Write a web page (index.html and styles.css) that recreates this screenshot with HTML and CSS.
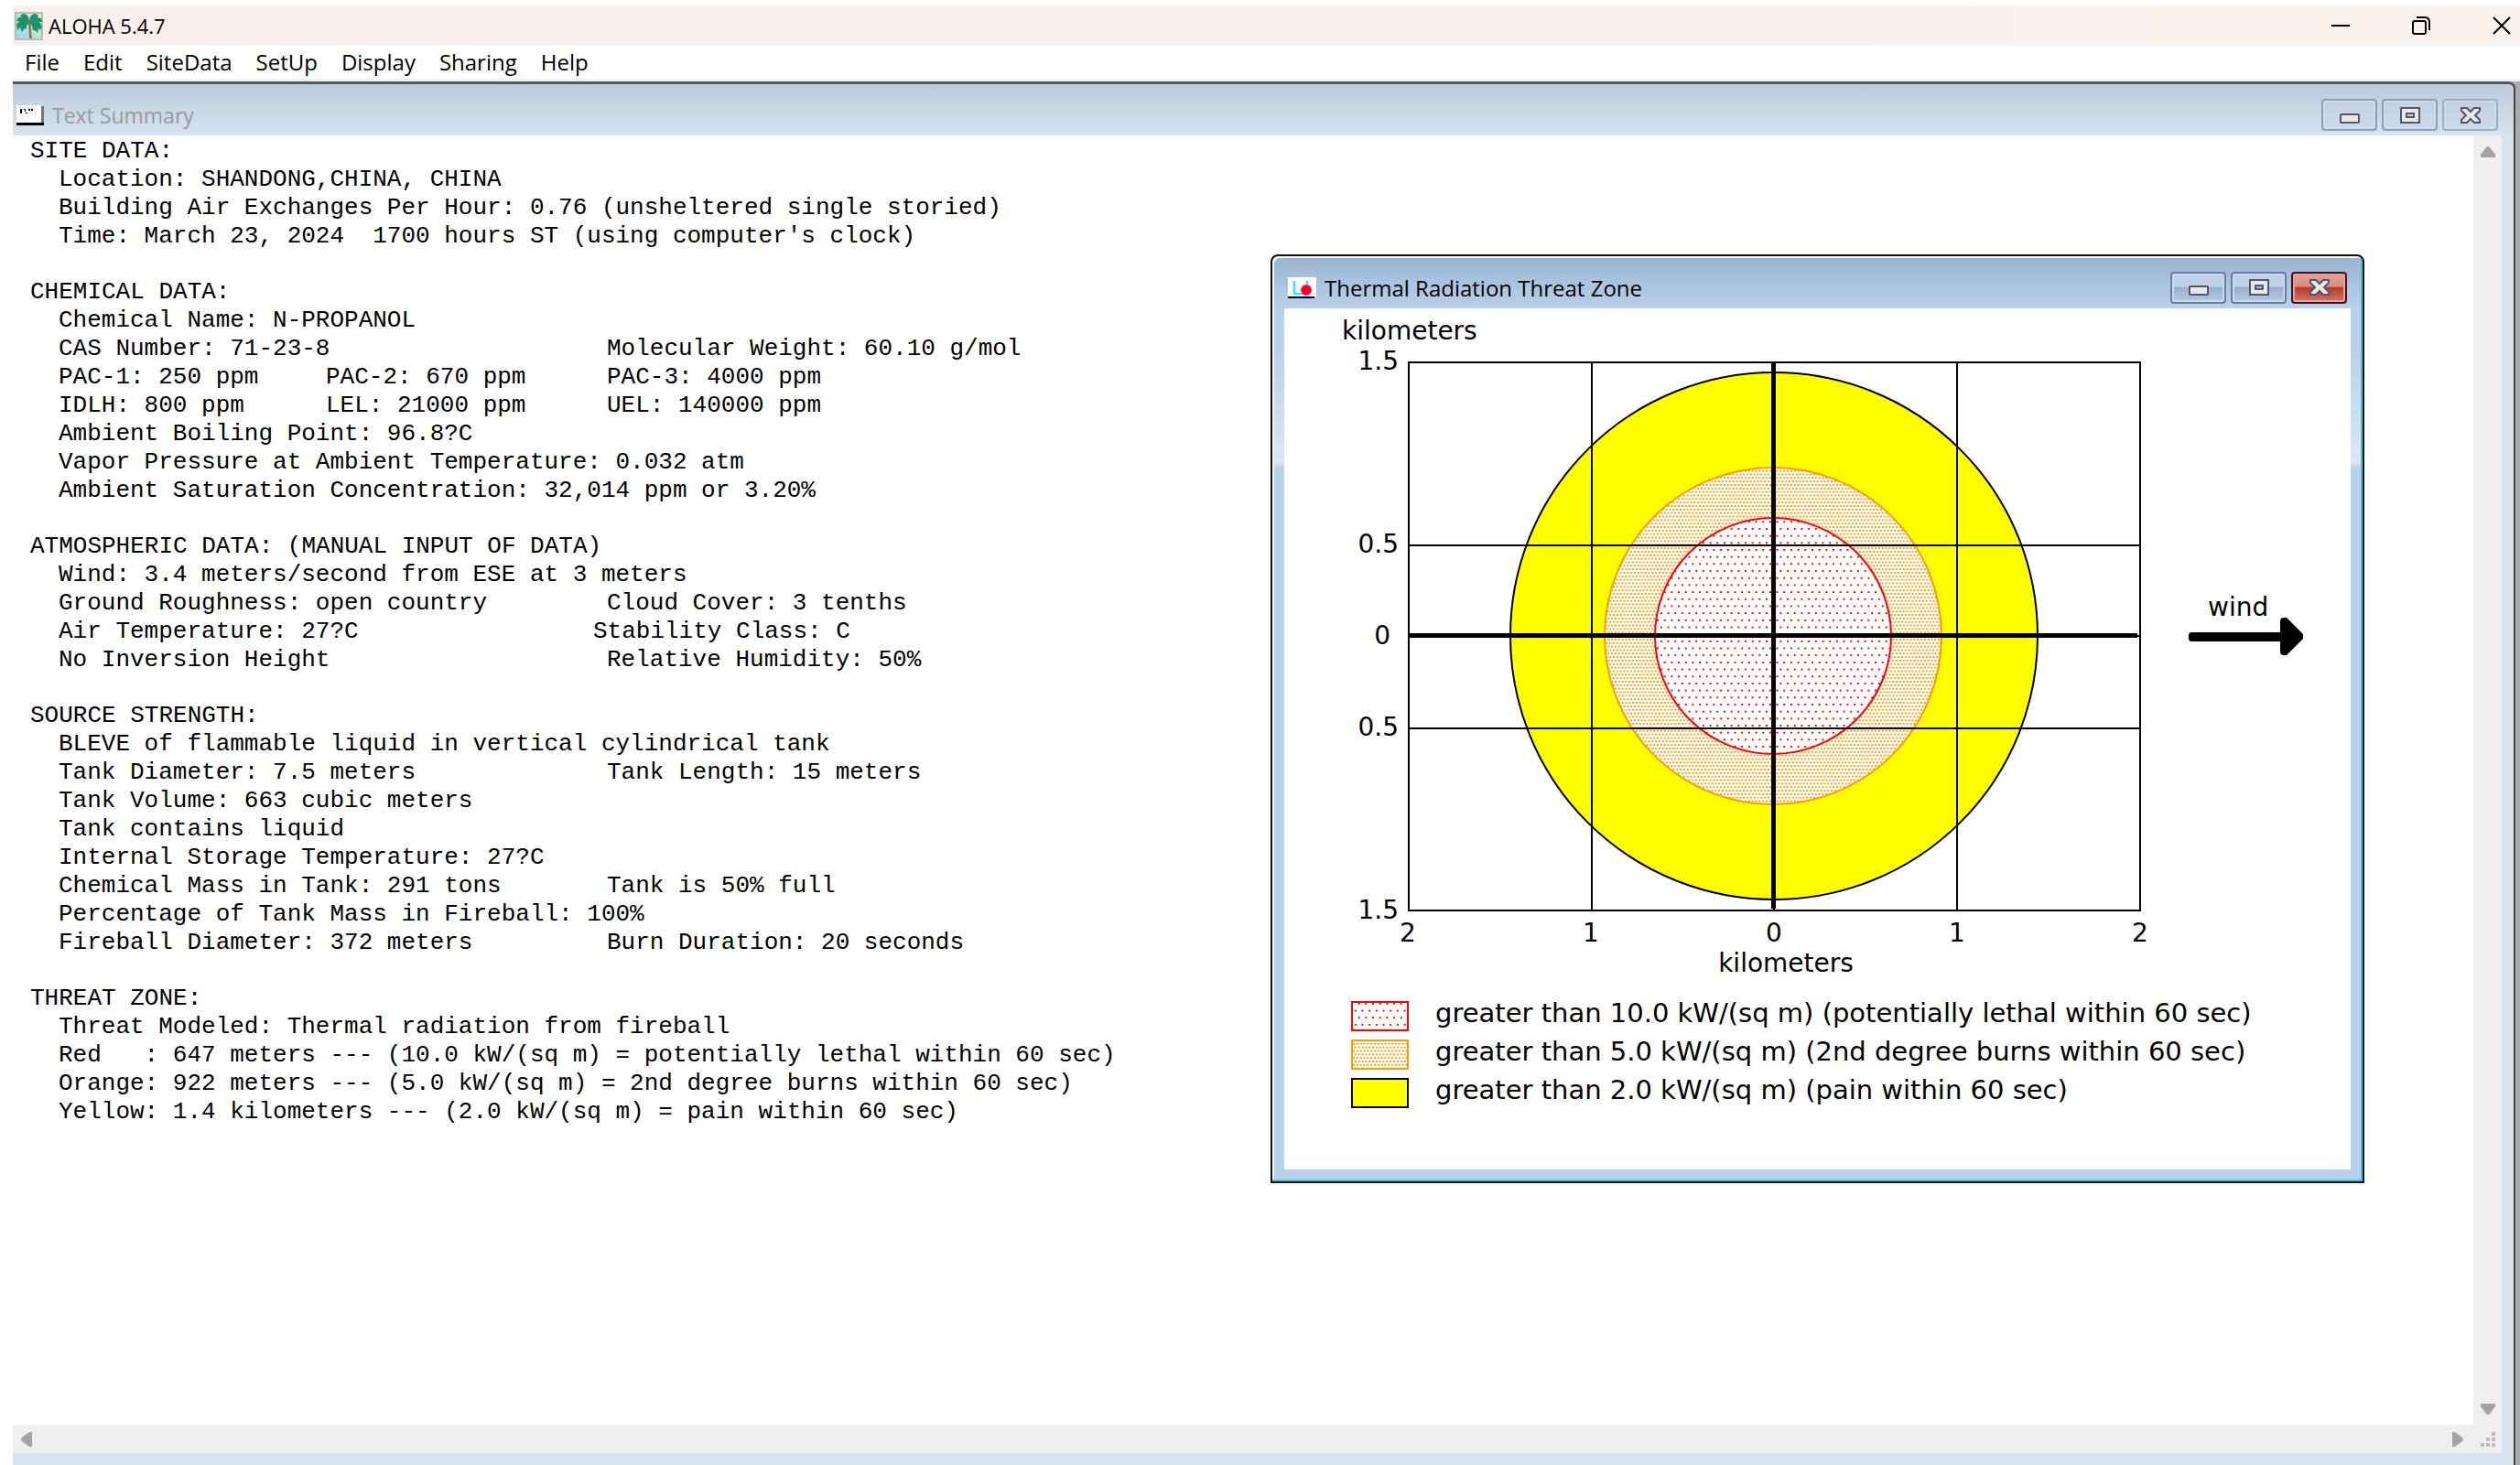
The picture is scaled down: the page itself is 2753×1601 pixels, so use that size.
FILE: index.html
```html
<!DOCTYPE html>
<html lang="en">
<head>
    <meta charset="UTF-8">
    <title>ALOHA 5.4.7</title>
    <link rel="stylesheet" href="styles.css">
</head>
<body>
    <header class="titlebar">
        <svg class="app-icon" viewBox="0 0 31 31" aria-hidden="true">
            <defs>
                <linearGradient id="sky" x1="0" y1="1" x2="1" y2="0">
                    <stop offset="0" stop-color="#8fd8ee"/>
                    <stop offset="1" stop-color="#f2efc0"/>
                </linearGradient>
            </defs>
            <rect x="1" y="1" width="29" height="29" fill="url(#sky)" stroke="#b4bcb8" stroke-width="2"/>
            <path d="M15 10 C15 16 16 22 16 29 L19 29 C18 22 18 16 17 10 Z" fill="#8a7350"/>
            <path d="M16 12 C16 6 14 2 9 2 L6 4 L8 6 L4 6 L2 10 L5 10 L2 14 L3 20 L6 17 L8 22 L11 18 L13 19 L13 15 Z" fill="#1c9370"/>
            <path d="M16 12 C16 6 18 2 23 2 L26 4 L25 6 L29 7 L30 11 L27 11 L30 16 L28 20 L26 18 L25 23 L22 20 L20 20 L19 15 Z" fill="#1c9370"/>
            <circle cx="16" cy="12" r="2" fill="#9c6a3a"/>
        </svg>
        <h1 class="app-title">ALOHA 5.4.7</h1>
        <div class="app-buttons">
            <button class="app-btn" aria-label="Minimize">
                <svg viewBox="0 0 20 20"><path d="M0 10 H20"/></svg>
            </button>
            <button class="app-btn" aria-label="Restore">
                <svg viewBox="0 0 20 20"><rect x="1" y="5" width="14" height="14" rx="2"/><path d="M5 1 H14 Q19 1 19 6 V15"/></svg>
            </button>
            <button class="app-btn" aria-label="Close">
                <svg viewBox="0 0 20 20"><path d="M1 1 L19 19 M19 1 L1 19"/></svg>
            </button>
        </div>
    </header>

    <nav class="menubar">
        <button class="menu-item">File</button>
        <button class="menu-item">Edit</button>
        <button class="menu-item">SiteData</button>
        <button class="menu-item">SetUp</button>
        <button class="menu-item">Display</button>
        <button class="menu-item">Sharing</button>
        <button class="menu-item">Help</button>
    </nav>

    <main class="desktop">
        <section class="summary-window">
            <div class="summary-titlebar">
                <svg class="summary-icon" viewBox="0 0 30 22" aria-hidden="true">
                    <rect width="27" height="20" fill="#fff"/>
                    <path d="M27 1 H30 V19 H27 Z" fill="#777"/>
                    <path d="M0 19 H30 V22 H0 Z" fill="#000"/>
                    <path d="M4 4 H6 V9 H4 Z M8 4 H10 V9 H12 V8 H10 Z M13 4 H15 V6 H13 Z M16 4 H18 V6 H16 Z" fill="#000"/>
                </svg>
                <h2 class="summary-title">Text Summary</h2>
                <div class="win-buttons inactive">
                    <button class="win-btn" aria-label="Minimize"><svg viewBox="0 0 22 18"><rect x="1" y="8" width="20" height="9" rx="1"/></svg></button>
                    <button class="win-btn" aria-label="Maximize"><svg viewBox="0 0 22 18"><path fill-rule="evenodd" d="M1 1 H21 V17 H1 Z M7 7 V11 H15 V7 Z"/></svg></button>
                    <button class="win-btn close" aria-label="Close"><svg viewBox="0 0 22 18"><path d="M1 1 H7 L11 5 L15 1 H21 V4 L16 9 L21 14 V17 H15 L11 13 L7 17 H1 V14 L6 9 L1 4 V1 Z"/></svg></button>
                </div>
            </div>

            <div class="pane">
                <div class="summary">
                    <section>
                        <h3>SITE DATA:</h3>
                        <p>Location: SHANDONG,CHINA, CHINA</p>
                        <p>Building Air Exchanges Per Hour: 0.76 (unsheltered single storied)</p>
                        <p>Time: March 23, 2024  1700 hours ST (using computer's clock)</p>
                    </section>
                    <section>
                        <h3>CHEMICAL DATA:</h3>
                        <p>Chemical Name: N-PROPANOL</p>
                        <p class="cols"><span class="wide">CAS Number: 71-23-8</span><span>Molecular Weight: 60.10 g/mol</span></p>
                        <p class="cols"><span>PAC-1: 250 ppm</span><span>PAC-2: 670 ppm</span><span>PAC-3: 4000 ppm</span></p>
                        <p class="cols"><span>IDLH: 800 ppm</span><span>LEL: 21000 ppm</span><span>UEL: 140000 ppm</span></p>
                        <p>Ambient Boiling Point: 96.8?C</p>
                        <p>Vapor Pressure at Ambient Temperature: 0.032 atm</p>
                        <p>Ambient Saturation Concentration: 32,014 ppm or 3.20%</p>
                    </section>
                    <section>
                        <h3>ATMOSPHERIC DATA: (MANUAL INPUT OF DATA)</h3>
                        <p>Wind: 3.4 meters/second from ESE at 3 meters</p>
                        <p class="cols"><span class="wide">Ground Roughness: open country</span><span>Cloud Cover: 3 tenths</span></p>
                        <p class="cols early"><span class="wide">Air Temperature: 27?C</span><span>Stability Class: C</span></p>
                        <p class="cols"><span class="wide">No Inversion Height</span><span>Relative Humidity: 50%</span></p>
                    </section>
                    <section>
                        <h3>SOURCE STRENGTH:</h3>
                        <p>BLEVE of flammable liquid in vertical cylindrical tank</p>
                        <p class="cols"><span class="wide">Tank Diameter: 7.5 meters</span><span>Tank Length: 15 meters</span></p>
                        <p>Tank Volume: 663 cubic meters</p>
                        <p>Tank contains liquid</p>
                        <p>Internal Storage Temperature: 27?C</p>
                        <p class="cols"><span class="wide">Chemical Mass in Tank: 291 tons</span><span>Tank is 50% full</span></p>
                        <p>Percentage of Tank Mass in Fireball: 100%</p>
                        <p class="cols"><span class="wide">Fireball Diameter: 372 meters</span><span>Burn Duration: 20 seconds</span></p>
                    </section>
                    <section>
                        <h3>THREAT ZONE:</h3>
                        <p>Threat Modeled: Thermal radiation from fireball</p>
                        <p>Red   : 647 meters --- (10.0 kW/(sq m) = potentially lethal within 60 sec)</p>
                        <p>Orange: 922 meters --- (5.0 kW/(sq m) = 2nd degree burns within 60 sec)</p>
                        <p>Yellow: 1.4 kilometers --- (2.0 kW/(sq m) = pain within 60 sec)</p>
                    </section>
                </div>
                <div class="scroll-v">
                    <button class="scroll-btn" aria-label="Scroll up"><svg viewBox="0 0 16 16"><path d="M6 3 Q8 1 10 3 L16 11 V14 H0 V11 Z"/></svg></button>
                    <button class="scroll-btn" aria-label="Scroll down"><svg viewBox="0 0 16 16"><path d="M6 13 Q8 15 10 13 L16 5 V2 H0 V5 Z"/></svg></button>
                </div>
                <div class="scroll-h">
                    <button class="scroll-btn" aria-label="Scroll left"><svg viewBox="0 0 16 16"><path d="M3 6 Q1 8 3 10 L11 16 H14 V0 H11 Z"/></svg></button>
                    <button class="scroll-btn" aria-label="Scroll right"><svg viewBox="0 0 16 16"><path d="M13 6 Q15 8 13 10 L5 16 H2 V0 H5 Z"/></svg></button>
                </div>
                <div class="grip">
                    <svg viewBox="0 0 16 16" aria-hidden="true"><path d="M12 0h4v4h-4z M6 6h4v4h-4z M12 6h4v4h-4z M0 12h4v4h-4z M6 12h4v4h-4z M12 12h4v4h-4z"/></svg>
                </div>
            </div>
        </section>

        <section class="threat-window">
            <div class="threat-titlebar">
                <svg class="threat-icon" viewBox="0 0 31 23" aria-hidden="true">
                    <rect width="31" height="21" fill="#fff"/>
                    <path d="M7 4 V18 H16 M21 4 V9" fill="none" stroke="#0ff" stroke-width="2"/>
                    <ellipse cx="20" cy="14" rx="6" ry="6" fill="#f0f"/>
                    <circle cx="20" cy="14" r="5" fill="#f00"/>
                    <path d="M0 21 H29 V23 H0 Z" fill="#000"/>
                </svg>
                <h2 class="threat-title">Thermal Radiation Threat Zone</h2>
                <div class="win-buttons">
                    <button class="win-btn" aria-label="Minimize"><svg viewBox="0 0 22 18"><rect x="1" y="8" width="20" height="9" rx="1"/></svg></button>
                    <button class="win-btn" aria-label="Maximize"><svg viewBox="0 0 22 18"><path fill-rule="evenodd" d="M1 1 H21 V17 H1 Z M7 7 V11 H15 V7 Z"/></svg></button>
                    <button class="win-btn close" aria-label="Close"><svg viewBox="0 0 22 18"><path d="M1 1 H7 L11 5 L15 1 H21 V4 L16 9 L21 14 V17 H15 L11 13 L7 17 H1 V14 L6 9 L1 4 V1 Z"/></svg></button>
                </div>
            </div>
            <div class="threat-body">
                <svg class="chart" viewBox="0 0 1165 740" role="img" aria-label="Threat zone plot">
                    <defs>
                        <pattern id="redDots" width="4" height="8" patternUnits="userSpaceOnUse" patternTransform="scale(1.92)">
                            <rect width="4" height="8" fill="#fff"/>
                            <path d="M0 1h1v1h-1z M2 5h1v1h-1z" fill="#f00"/>
                        </pattern>
                        <pattern id="orangeDots" width="2" height="4" patternUnits="userSpaceOnUse" patternTransform="scale(1.92)">
                            <rect width="2" height="4" fill="#fff"/>
                            <path d="M0 0h1v1h-1z M1 2h1v1h-1z" fill="#ff9a00"/>
                        </pattern>
                    </defs>

                    <!-- zones -->
                    <circle cx="535" cy="358" r="288" fill="#ff0" stroke="#000" stroke-width="2"/>
                    <circle cx="534" cy="358" r="184" fill="url(#orangeDots)" stroke="#ff9a00" stroke-width="2"/>
                    <circle cx="534" cy="358" r="129" fill="url(#redDots)" stroke="#f00" stroke-width="2"/>

                    <!-- grid and axes -->
                    <path class="grid" d="M136 59 H935 V658 H136 Z M336 59 V658 M535 59 V658 M735 59 V658 M136 259 H935 M136 358 H935 M136 459 H935"/>
                    <path class="axis" d="M137 357 H932 M534 59 V656"/>

                    <!-- wind arrow -->
                    <path d="M990 354 H1088 V342 Q1088 338 1092 338 H1095 L1113 356 V361 L1095 379 H1092 Q1088 379 1088 375 V364 H990 L988 362 V356 Z"/>
                    <text x="1009" y="336">wind</text>

                    <text x="63" y="34">kilometers</text>
                    <g text-anchor="end">
                        <text x="125" y="67">1.5</text>
                        <text x="125" y="267">0.5</text>
                        <text x="116" y="367">0</text>
                        <text x="125" y="467">0.5</text>
                        <text x="125" y="667">1.5</text>
                    </g>
                    <g text-anchor="middle">
                        <text x="135" y="692">2</text>
                        <text x="335" y="692">1</text>
                        <text x="535" y="692">0</text>
                        <text x="735" y="692">1</text>
                        <text x="935" y="692">2</text>
                        <text x="548" y="725">kilometers</text>
                    </g>
                </svg>
                <ul class="legend">
                    <li><svg class="swatch" viewBox="0 0 63 33"><rect x="1" y="1" width="61" height="31" fill="url(#redDots)" stroke="#f00" stroke-width="2"/></svg>greater than 10.0 kW/(sq m) (potentially lethal within 60 sec)</li>
                    <li><svg class="swatch" viewBox="0 0 63 33"><rect x="1" y="1" width="61" height="31" fill="url(#orangeDots)" stroke="#ff9a00" stroke-width="2"/></svg>greater than 5.0 kW/(sq m) (2nd degree burns within 60 sec)</li>
                    <li><svg class="swatch" viewBox="0 0 63 33"><rect x="1" y="1" width="61" height="31" fill="#ff0" stroke="#000" stroke-width="2"/></svg>greater than 2.0 kW/(sq m) (pain within 60 sec)</li>
                </ul>
            </div>
        </section>
    </main>
</body>
</html>
```
FILE: styles.css
```css
* {
    margin: 0;
    padding: 0;
    box-sizing: border-box;
}

body {
    height: 100vh;
    padding: 6px 0 0 14px;
    display: flex;
    flex-direction: column;
    background: #fff;
    color: #000;
    font-family: 'Open Sans', 'Noto Sans', sans-serif;
    overflow: hidden;
}

button {
    border: none;
    background: none;
    font: inherit;
    color: inherit;
}

svg {
    display: block;
}

/* main window */
.titlebar {
    display: flex;
    align-items: center;
    height: 44px;
    padding: 0 10px 0 2px;
    background: linear-gradient(90deg, #f9f0ee 60%, #f9f1eb);
}

.app-icon {
    width: 31px;
    height: 31px;
}

.app-title {
    margin-left: 6px;
    font-size: 22px;
    font-weight: 400;
}

.app-buttons {
    display: flex;
    gap: 68px;
    margin-left: auto;
}

.app-btn svg {
    width: 20px;
    height: 20px;
    fill: none;
    stroke: #000;
    stroke-width: 2;
}

.menubar {
    display: flex;
    align-items: center;
    gap: 26px;
    height: 39px;
    padding-left: 13px;
    border-bottom: 3px solid #f0f0f0;
}

.menu-item {
    font-size: 24px;
    line-height: 32px;
}

.desktop {
    flex: 1;
    min-height: 0;
    position: relative;
    padding-right: 5px;
    background: #ababab;
}

/* text summary window */
.summary-window {
    height: 100%;
    display: flex;
    flex-direction: column;
    padding: 0 13px 13px 0;
    border-top: 3px solid #55585c;
    border-right: 2px solid #444;
    border-top-right-radius: 8px;
    background: #d6e4f2;
}

.summary-titlebar {
    display: flex;
    align-items: center;
    height: 56px;
    margin-right: -13px;
    padding: 11px 17px 0 4px;
    background: linear-gradient(#bdcad9, #d6e4f2);
    border-top-right-radius: 6px;
}

.summary-icon {
    width: 30px;
    height: 22px;
}

.summary-title {
    margin-left: 9px;
    font-size: 23px;
    font-weight: 400;
    color: #999;
}

.win-buttons {
    display: flex;
    gap: 5px;
    margin-left: auto;
}

.win-btn {
    display: flex;
    align-items: center;
    justify-content: center;
    width: 61px;
    height: 35px;
    border: 2px solid #6c7f9f;
    border-radius: 4px;
    box-shadow: inset 0 0 0 2px #c9daec;
    background: linear-gradient(#bed1e6 45%, #97b0cd 50%, #b4cbe4);
}

.win-btn.close {
    border-color: #47121f;
    box-shadow: inset 0 0 0 2px #e0a49c;
    background: linear-gradient(#e5a197, #dc8d80 45%, #b63c27 50%, #d2786a);
}

.inactive .win-btn {
    border-color: #8d9dbc;
    box-shadow: inset 0 0 0 2px #cfdcea;
    background: linear-gradient(#c3d0e0, #ccdaea);
}

.inactive .win-btn.close {
    border-color: #9fadbf;
}

.win-btn svg {
    width: 22px;
    height: 18px;
    fill: #e8e8e8;
    stroke: #55566a;
    stroke-width: 2;
}

.pane {
    flex: 1;
    min-height: 0;
    display: grid;
    grid-template-columns: 1fr 31px;
    grid-template-rows: 1fr 31px;
    background: #efefef;
}

.summary {
    display: flex;
    flex-direction: column;
    gap: 30px;
    padding: 2px 19px 0;
    background: #fff;
    font-family: 'Liberation Mono', 'Courier New', monospace;
    font-size: 26px;
    line-height: 31px;
    overflow: hidden;
}

.summary h3 {
    font-size: 26px;
    font-weight: 400;
}

.summary p {
    padding-left: 31px;
    white-space: pre;
}

.cols {
    display: grid;
    grid-template-columns: 292px 307px auto;
}

.cols.early {
    grid-template-columns: 292px 292px auto;
}

.wide {
    grid-column: span 2;
}

.scroll-v {
    display: flex;
    flex-direction: column;
    justify-content: space-between;
    align-items: center;
    padding: 10px 0 9px;
}

.scroll-h {
    display: flex;
    justify-content: space-between;
    align-items: center;
    padding: 0 9px 0 7px;
}

.scroll-btn svg {
    width: 16px;
    height: 16px;
    fill: #a3a3a3;
}

.grip {
    display: flex;
    align-items: center;
    justify-content: center;
}

.grip svg {
    width: 16px;
    height: 16px;
    fill: #bdbdbd;
}

/* threat zone window */
.threat-window {
    position: absolute;
    top: 189px;
    left: 1374px;
    width: 1195px;
    padding: 0 13px 13px;
    border: 2px solid #111;
    border-radius: 8px 8px 0 0;
    box-shadow: inset -2px -2px 0 #3cc4dd, inset 2px 2px 0 #f4f8fc;
    background: linear-gradient(#9ab4d1, #b9d1ea 57px, #b9d1ea 100px, #dbe7f4 225px, #b9d1ea 231px);
}

.threat-titlebar {
    display: flex;
    align-items: center;
    height: 57px;
    padding: 11px 4px 0;
}

.threat-icon {
    width: 31px;
    height: 23px;
}

.threat-title {
    margin-left: 9px;
    font-size: 24px;
    font-weight: 400;
}

.threat-body {
    padding-bottom: 67px;
    background: #fff;
    font-family: 'DejaVu Sans', Verdana, sans-serif;
    font-size: 28px;
}

.chart {
    width: 100%;
}

.grid {
    fill: none;
    stroke: #000;
    stroke-width: 2;
    shape-rendering: crispEdges;
}

.axis {
    fill: none;
    stroke: #000;
    stroke-width: 5;
    shape-rendering: crispEdges;
}

.legend {
    display: flex;
    flex-direction: column;
    gap: 6px;
    padding: 14px 0 0 73px;
    list-style: none;
    font-size: 29px;
}

.legend li {
    display: flex;
    gap: 29px;
    line-height: 32px;
    white-space: nowrap;
}

.swatch {
    flex: none;
    width: 63px;
    height: 33px;
    margin-top: 3px;
}
```
